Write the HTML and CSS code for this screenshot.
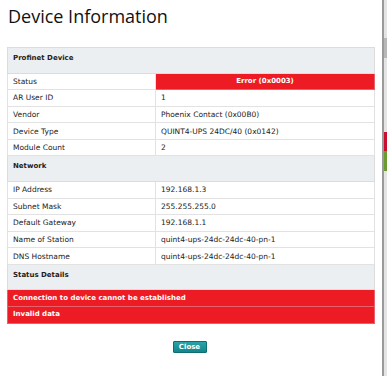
FILE: index.html
```html
<!doctype html>
<html>
  <head>
    <title>Device Information</title>
    <link rel="stylesheet" href="styles.css">
  </head>
  <body>
    <div class="dialog">
      <h1 class="title">Device Information</h1>
      <table class="info">
        <tr class="section"><th colspan="2">Profinet Device</th></tr>
        <tr><td class="label">Status</td><td class="error center">Error (0x0003)</td></tr>
        <tr><td class="label">AR User ID</td><td>1</td></tr>
        <tr><td class="label">Vendor</td><td>Phoenix Contact (0x00B0)</td></tr>
        <tr><td class="label">Device Type</td><td>QUINT4-UPS 24DC/40 (0x0142)</td></tr>
        <tr><td class="label">Module Count</td><td>2</td></tr>
        <tr class="section"><th colspan="2">Network</th></tr>
        <tr><td class="label">IP Address</td><td>192.168.1.3</td></tr>
        <tr><td class="label">Subnet Mask</td><td>255.255.255.0</td></tr>
        <tr><td class="label">Default Gateway</td><td>192.168.1.1</td></tr>
        <tr><td class="label">Name of Station</td><td>quint4-ups-24dc-24dc-40-pn-1</td></tr>
        <tr><td class="label">DNS Hostname</td><td>quint4-ups-24dc-24dc-40-pn-1</td></tr>
        <tr class="section"><th colspan="2">Status Details</th></tr>
        <tr><td class="error" colspan="2">Connection to device cannot be established</td></tr>
        <tr><td class="error" colspan="2">Invalid data</td></tr>
      </table>
      <div class="actions">
        <button class="close">Close</button>
      </div>
    </div>
  </body>
</html>
```
FILE: styles.css
```css
html {
  background: linear-gradient(to bottom, #e4e4e4 0, #e4e4e4 38px, #b8b8b8 38px, #b8b8b8 58px, #e4e4e4 58px, #e4e4e4 132px, #c8102e 132px, #c8102e 151px, #6b9a2e 151px, #6b9a2e 171px, #e4e4e4 171px);
}

body {
  margin: 0;
  font-family: "DejaVu Sans", Verdana, sans-serif;
}

.dialog {
  width: 384px;
  height: 376px;
  box-sizing: border-box;
  background-color: #fff;
  border-right: 2px solid #9a9a9a;
  padding: 0 10px 0 7px;
}

.title {
  margin: 0;
  padding: 4px 0 0 1px;
  height: 47px;
  box-sizing: border-box;
  font-family: "Open Sans", sans-serif;
  font-weight: normal;
  font-size: 18px;
  line-height: 24px;
  color: #111;
}

.info {
  width: 368px;
  border-collapse: collapse;
  border: 1px solid #dcdcdc;
  font-size: 7px;
  color: #222;
}

.info td {
  height: 15.6px;
  padding: 0 5px;
  border: 1px solid #e2e2e2;
  background-color: #fff;
  font-size: 7.5px;
  line-height: 9px;
}

.info .label {
  width: 137px;
}

.section th {
  height: 25.5px;
  padding: 6px 5px 0;
  box-sizing: border-box;
  text-align: left;
  vertical-align: top;
  background-color: #eceff2;
  border: 1px solid #dcdcdc;
  font-weight: bold;
}

.info td.error {
  background-color: #ed1c24;
  border-color: #e8606a;
  color: #fff;
  font-weight: bold;
  font-size: 7px;
}

.center {
  text-align: center;
}

.actions {
  display: flex;
  justify-content: center;
  padding-top: 17px;
}

.close {
  width: 34px;
  height: 12px;
  padding: 0;
  border: 1px solid #0d6e72;
  border-radius: 1px;
  background: linear-gradient(to bottom, #2aa3a8, #13868b);
  color: #fff;
  font-family: "DejaVu Sans", Verdana, sans-serif;
  font-weight: bold;
  font-size: 7px;
  line-height: 10px;
}
```
